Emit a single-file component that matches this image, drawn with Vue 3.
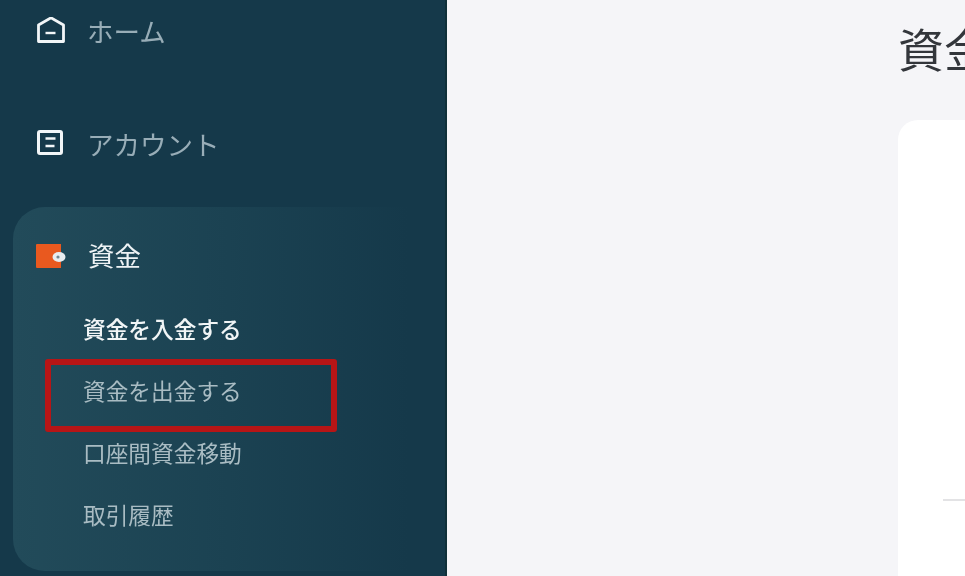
<script setup>
const subItems = [
  { label: '資金を入金する', active: true, marked: false },
  { label: '資金を出金する', active: false, marked: true },
  { label: '口座間資金移動', active: false, marked: false },
  { label: '取引履歴', active: false, marked: false },
]
</script>

<template>
  <div class="page">
    <aside class="sidebar">
      <a class="nav-item">
        <svg class="icon" viewBox="0 1 28 28" fill="none" stroke="#f2f6f8" stroke-width="2.800">
          <path d="M1.500 9 14 1.800 26.500 9v16.500H1.500z" stroke-linejoin="round" />
          <path d="M8.500 17h10" stroke-width="2.400" />
        </svg>
        <span>ホーム</span>
      </a>
      <a class="nav-item">
        <svg class="icon" viewBox="0 0 28 28" fill="none" stroke="#f2f6f8" stroke-width="3">
          <rect x="1.500" y="1.500" width="23" height="22" rx="1.500" />
          <path d="M8.500 8.500h10M8.500 16h9" stroke-width="2.400" />
        </svg>
        <span>アカウント</span>
      </a>
      <section class="group">
        <a class="nav-item nav-item-active">
          <svg class="icon icon-wallet" viewBox="0 0 30 28">
            <path d="M0 3a1 1 0 0 1 1-1h24v24H1a1 1 0 0 1-1-1z" fill="#e9591f" />
            <ellipse cx="23" cy="15" rx="6.500" ry="5" fill="#e8edf0" />
            <circle cx="22" cy="15" r="1.600" fill="#6f8792" />
          </svg>
          <span class="active-label">資金</span>
        </a>
        <ul class="sub-list">
          <li
            v-for="item in subItems"
            :key="item.label"
            class="sub-item"
            :class="{ 'sub-item-active': item.active }"
          >
            {{ item.label }}
            <span v-if="item.marked" class="marker"></span>
          </li>
        </ul>
      </section>
    </aside>
    <main class="main">
      <h1 class="title">資金</h1>
      <div class="card">
        <div class="rule"></div>
      </div>
    </main>
  </div>
</template>

<style>
html, body { margin: 0; overflow: hidden; }
</style>

<style scoped>
.page {
  display: flex;
  width: 965px;
  height: 576px;
  overflow: hidden;
  background: #f5f5f8;
  font-family: "Noto Sans CJK JP", "Noto Sans", sans-serif;
  filter: blur(0.35px);
}
.sidebar {
  box-sizing: border-box;
  flex: 0 0 447px;
  height: 576px;
  padding: 0 0 0 13px;
  background: #15394a;
  border-right: 2px solid #103039;
  overflow: hidden;
}
.nav-item {
  display: flex;
  align-items: center;
  gap: 22px;
  height: 62px;
  margin-left: 24px;
  margin-bottom: 51px;
  color: #98adb7;
  font-size: 26.500px;
  line-height: 1;
}
.icon {
  flex: none;
  width: 28px;
  height: 28px;
}
.icon-wallet {
  width: 30px;
}
.nav-item-active {
  box-sizing: border-box;
  height: 92px;
  padding-top: 6px;
  margin: 0 0 0 23px;
  color: #eef3f5;
  font-weight: 400;
}
.active-label {
  margin-bottom: 2px;
}
.group {
  box-sizing: border-box;
  width: 430px;
  height: 364px;
  margin-top: -19px;
  border-radius: 32px;
  background: linear-gradient(90deg, #224b5a 0%, #1b4252 50%, #15394a 92%);
}
.sub-list {
  list-style: none;
  margin: 0;
  padding: 0 0 0 70px;
}
.sub-item {
  position: relative;
  height: 62px;
  color: #a9bcc3;
  font-size: 22.700px;
  line-height: 60px;
}
.sub-item-active {
  color: #f1f5f6;
  font-weight: 500;
}
.marker {
  position: absolute;
  left: -38px;
  top: -2px;
  box-sizing: border-box;
  width: 292px;
  height: 73px;
  border: 6.500px solid #b71516;
  border-radius: 3px;
}
.main {
  flex: 1;
  min-width: 0;
  padding-left: 451px;
}
.title {
  margin: 0;
  height: 120px;
  width: 100px;
  color: #33363b;
  font-size: 46px;
  font-weight: 400;
  line-height: 94px;
  white-space: nowrap;
}
.card {
  box-sizing: border-box;
  width: 120px;
  height: 500px;
  padding: 379px 0 0 45px;
  background: #fff;
  border-radius: 20px;
}
.rule {
  height: 2px;
  background: #e3e3e5;
}
</style>
